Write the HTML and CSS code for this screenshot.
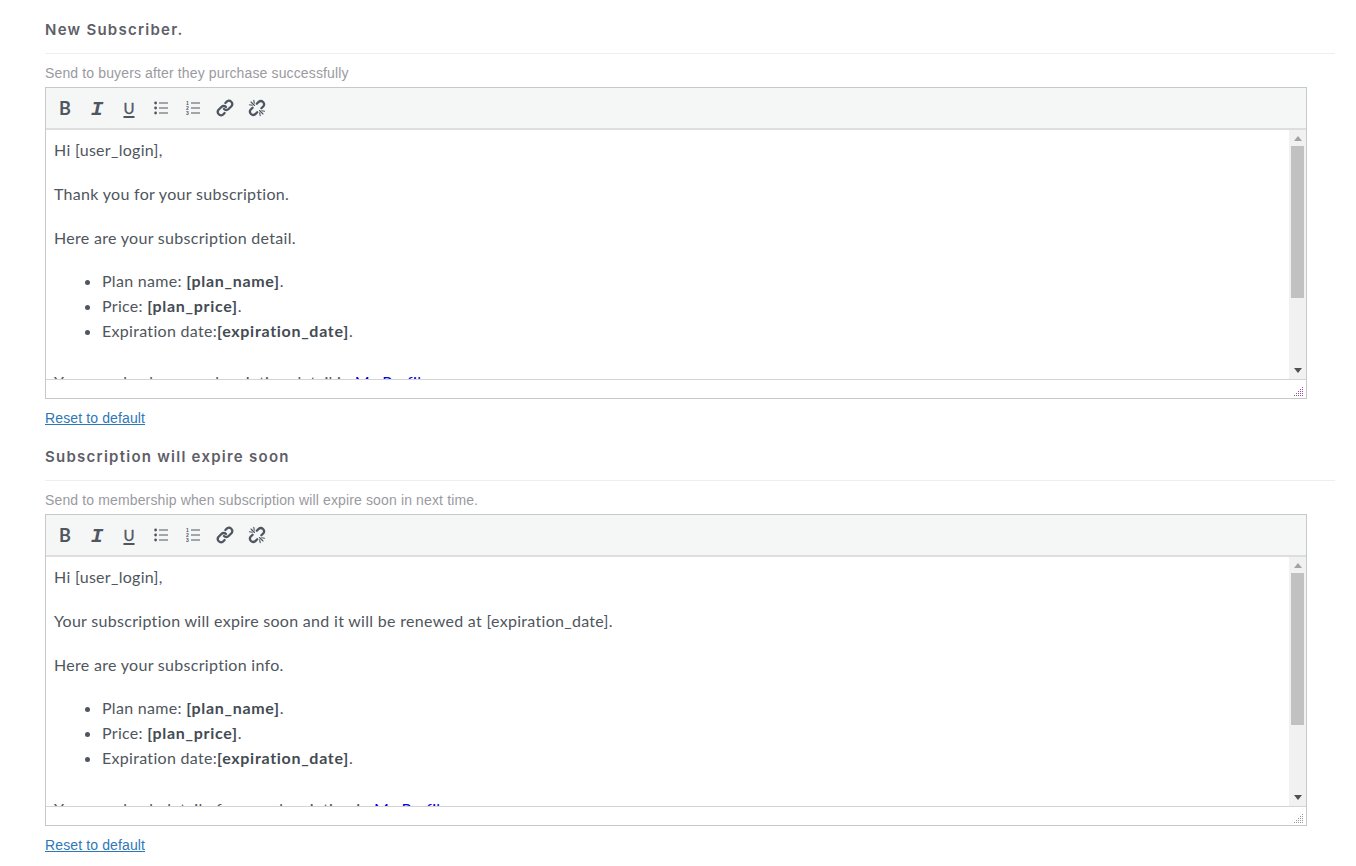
FILE: index.html
```html
<!DOCTYPE html>
<html lang="en">
<head>
<meta charset="utf-8">
<title>Emails</title>
<link rel="stylesheet" href="styles.css">
</head>
<body>
<svg class="defs" width="0" height="0" aria-hidden="true">
  <defs>
    <symbol id="i-ul" viewBox="0 0 14 14">
      <circle cx="1.6" cy="2" r="1.4"/><circle cx="1.6" cy="7" r="1.4"/><circle cx="1.6" cy="12" r="1.4"/>
      <rect x="5" y="1.5" width="9" height="1"/><rect x="5" y="6.500" width="9" height="1"/><rect x="5" y="11.500" width="9" height="1"/>
    </symbol>
    <symbol id="i-ol" viewBox="0 0 14 14">
      <text x="0" y="4" class="ol-num">1</text><text x="0" y="9" class="ol-num">2</text><text x="0" y="14" class="ol-num">3</text>
      <rect x="5" y="1.5" width="9" height="1"/><rect x="5" y="6.500" width="9" height="1"/><rect x="5" y="11.500" width="9" height="1"/>
    </symbol>
    <symbol id="i-link" viewBox="0 0 18 18">
      <g fill="none" stroke="currentColor" stroke-width="2.300" stroke-linecap="round">
        <path d="M8 10a3.200 3.200 0 0 0 4.600 0l3-3a3.300 3.300 0 0 0-4.600-4.600l-1.600 1.600"/>
        <path d="M10 8a3.200 3.200 0 0 0-4.600 0l-3 3a3.300 3.300 0 0 0 4.600 4.600l1.600-1.600"/>
      </g>
    </symbol>
    <symbol id="i-unlink" viewBox="0 0 18 18">
      <g fill="none" stroke="currentColor" stroke-width="2.300" stroke-linecap="round">
        <path d="M8.800 4.700l2-2a3.300 3.300 0 0 1 4.600 4.600l-2 2"/>
        <path d="M9.200 13.300l-2 2a3.300 3.300 0 0 1-4.600-4.600l2-2"/>
      </g>
      <g fill="none" stroke="currentColor" stroke-width="1.100" stroke-linecap="round">
        <path d="M5.800 1.400l.5 2.800M1.400 5.800l2.800.5M3 3l3.500 3.500"/>
        <path d="M12.200 16.600l-.5-2.800M16.600 12.200l-2.800-.5M15 15l-3.500-3.500"/>
      </g>
    </symbol>
    <symbol id="i-grip" viewBox="0 0 10 10">
      <rect x="8" y="0" width="1" height="1"/>
      <rect x="6" y="2" width="1" height="1"/><rect x="8" y="2" width="1" height="1"/>
      <rect x="4" y="4" width="1" height="1"/><rect x="6" y="4" width="1" height="1"/><rect x="8" y="4" width="1" height="1"/>
      <rect x="2" y="6" width="1" height="1"/><rect x="4" y="6" width="1" height="1"/><rect x="6" y="6" width="1" height="1"/><rect x="8" y="6" width="1" height="1"/>
      <rect x="0" y="8" width="1" height="1"/><rect x="2" y="8" width="1" height="1"/><rect x="4" y="8" width="1" height="1"/><rect x="6" y="8" width="1" height="1"/><rect x="8" y="8" width="1" height="1"/>
    </symbol>
  </defs>
</svg>

<main class="page">
  <section class="block">
    <h2 class="block-title">New Subscriber.</h2>
    <p class="block-desc">Send to buyers after they purchase successfully</p>
    <div class="editor">
      <div class="toolbar">
        <span class="tool tool-b">B</span>
        <span class="tool tool-i">I</span>
        <span class="tool tool-u">U</span>
        <span class="tool"><svg class="icon-list" width="14" height="14"><use href="#i-ul"/></svg></span>
        <span class="tool"><svg class="icon-list" width="14" height="14"><use href="#i-ol"/></svg></span>
        <span class="tool"><svg class="icon-chain" width="18" height="18"><use href="#i-link"/></svg></span>
        <span class="tool"><svg class="icon-chain" width="18" height="18"><use href="#i-unlink"/></svg></span>
      </div>
      <div class="edit-row">
        <div class="content">
          <p>Hi [user_login],</p>
          <p>Thank you for your subscription.</p>
          <p>Here are your subscription detail.</p>
          <ul>
            <li>Plan name: <strong>[plan_name]</strong>.</li>
            <li>Price: <strong>[plan_price]</strong>.</li>
            <li>Expiration date:<strong>[expiration_date]</strong>.</li>
          </ul>
          <p>You can check your subscription detail in <a class="plain-link" href="#">My Profile</a></p>
        </div>
        <div class="scrollbar">
          <span class="arrow arrow-up"></span>
          <span class="thumb"></span>
          <span class="track-rest"></span>
          <span class="arrow arrow-down"></span>
        </div>
      </div>
      <div class="statusbar"><svg class="grip grip-active" width="10" height="10"><use href="#i-grip"/></svg></div>
    </div>
    <a class="reset" href="#">Reset to default</a>
  </section>

  <section class="block">
    <h2 class="block-title">Subscription will expire soon</h2>
    <p class="block-desc">Send to membership when subscription will expire soon in next time.</p>
    <div class="editor">
      <div class="toolbar">
        <span class="tool tool-b">B</span>
        <span class="tool tool-i">I</span>
        <span class="tool tool-u">U</span>
        <span class="tool"><svg class="icon-list" width="14" height="14"><use href="#i-ul"/></svg></span>
        <span class="tool"><svg class="icon-list" width="14" height="14"><use href="#i-ol"/></svg></span>
        <span class="tool"><svg class="icon-chain" width="18" height="18"><use href="#i-link"/></svg></span>
        <span class="tool"><svg class="icon-chain" width="18" height="18"><use href="#i-unlink"/></svg></span>
      </div>
      <div class="edit-row">
        <div class="content">
          <p>Hi [user_login],</p>
          <p>Your subscription will expire soon and it will be renewed at [expiration_date].</p>
          <p>Here are your subscription info.</p>
          <ul>
            <li>Plan name: <strong>[plan_name]</strong>.</li>
            <li>Price: <strong>[plan_price]</strong>.</li>
            <li>Expiration date:<strong>[expiration_date]</strong>.</li>
          </ul>
          <p>You can check detail of your subscription in <a class="plain-link" href="#">My Profile</a></p>
        </div>
        <div class="scrollbar">
          <span class="arrow arrow-up"></span>
          <span class="thumb"></span>
          <span class="track-rest"></span>
          <span class="arrow arrow-down"></span>
        </div>
      </div>
      <div class="statusbar"><svg class="grip" width="10" height="10"><use href="#i-grip"/></svg></div>
    </div>
    <a class="reset" href="#">Reset to default</a>
  </section>
</main>
</body>
</html>
```

FILE: styles.css
```css
html, body {
  margin: 0;
  padding: 0;
  background: #fff;
  overflow: hidden;
}
.defs {
  position: absolute;
}
.page {
  width: 1290px;
  margin-left: 45px;
  font-family: "Lato", "Liberation Sans", sans-serif;
  color: #4b5259;
}
.block {
  height: 427px;
}
.block-title {
  margin: 0;
  padding: 20px 0 14px;
  height: 19px;
  line-height: 19px;
  font-family: "Inter", "Lato", sans-serif;
  font-size: 15px;
  font-weight: 600;
  letter-spacing: 1.25px;
  color: #5e5e68;
  border-bottom: 1px solid #eee;
  box-sizing: content-box;
}
.block-desc {
  margin: 0;
  padding-top: 11px;
  height: 22px;
  line-height: 17px;
  font-family: "Liberation Sans", Arial, sans-serif;
  font-size: 14px;
  letter-spacing: 0.135px;
  color: #9a9a9f;
}
.editor {
  width: 1260px;
  border: 1px solid #c8c8c8;
}
.toolbar {
  height: 40px;
  background: #f5f7f7;
  border-bottom: 2px solid #dedede;
  display: flex;
  align-items: center;
  padding-left: 3px;
}
.tool {
  flex: none;
  width: 32px;
  display: flex;
  align-items: center;
  justify-content: center;
  font-family: "Lato", sans-serif;
  font-size: 18px;
  font-weight: 700;
  line-height: 20px;
  color: #4f5660;
}
.tool-i {
  font-family: "Liberation Mono", monospace;
  font-style: italic;
  font-size: 21px;
  padding-top: 4px;
}
.tool-u {
  text-decoration: underline;
  text-decoration-thickness: 2px;
  text-underline-offset: 2px;
  font-size: 15px;
  font-weight: 400;
  -webkit-text-stroke: 0.3px #4f5660;
}
.icon-list {
  display: block;
  fill: #4f5660;
}
.icon-chain {
  display: block;
  color: #4f5660;
}
.ol-num {
  font-family: "Liberation Sans", sans-serif;
  font-size: 5px;
}
.edit-row {
  display: flex;
  height: 249px;
}
.content {
  flex: 1;
  min-width: 0;
  overflow: hidden;
  padding: 7px 8px 0;
  font-size: 16px;
  line-height: 25px;
  letter-spacing: 0.3px;
  color: #4f565d;
}
.content p {
  margin: 0 0 19px;
  white-space: nowrap;
}
.content ul {
  margin: -1px 0 26px;
  padding-left: 48px;
}
.content strong {
  font-weight: 700;
  letter-spacing: 0.7px;
  color: #444b52;
}
.plain-link {
  color: #0000ee;
  text-decoration: none;
}
.scrollbar {
  width: 17px;
  background: #f1f1f1;
  display: flex;
  flex-direction: column;
  align-items: center;
}
.arrow {
  flex: none;
  width: 0;
  height: 0;
  border-left: 4px solid transparent;
  border-right: 4px solid transparent;
}
.arrow-up {
  margin: 6px 0 5px;
  border-bottom: 5px solid #a3a3a3;
}
.arrow-down {
  margin: 5px 0 6px;
  border-top: 5px solid #505050;
}
.thumb {
  flex: none;
  width: 13px;
  height: 152px;
  background: #c1c1c1;
}
.track-rest {
  flex: 1;
}
.statusbar {
  height: 17px;
  border-top: 1px solid #d4d4d4;
  background: #fff;
  display: flex;
  justify-content: flex-end;
  align-items: flex-end;
  padding-right: 2px;
  padding-bottom: 1px;
  box-sizing: content-box;
}
.grip {
  display: block;
  fill: #9a9a9a;
}
.grip-active {
  fill: #a04aa8;
}
.reset {
  display: inline-block;
  margin-top: 11px;
  font-family: "Liberation Sans", Arial, sans-serif;
  font-size: 14px;
  line-height: 17px;
  letter-spacing: 0.125px;
  color: #2b78b8;
}
```
